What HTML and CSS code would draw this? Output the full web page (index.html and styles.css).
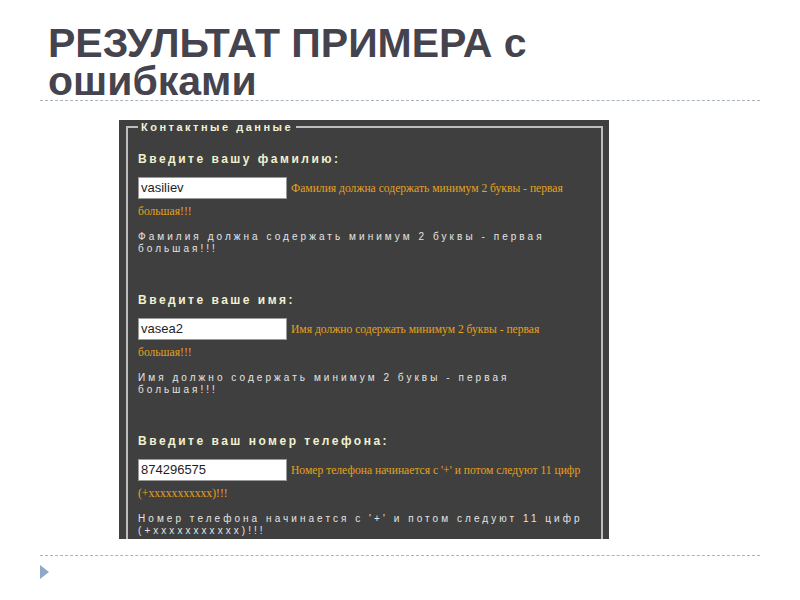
FILE: index.html
```html
<!DOCTYPE html>
<html lang="ru">
<head>
<meta charset="utf-8">
<title>Результат примера с ошибками</title>
<link rel="stylesheet" href="styles.css">
</head>
<body>
<div class="slide">
  <h1 class="title">РЕЗУЛЬТАТ ПРИМЕРА с<br>ошибками</h1>
  <div class="rule"></div>
  <div class="shot-wrap">
    <div class="shot">
      <fieldset class="form">
        <legend class="legend">Контактные данные</legend>
        <div class="section">
          <div class="label">Введите вашу фамилию:</div>
          <div class="row"><span class="input">vasiliev</span><span class="err">Фамилия должна содержать минимум 2 буквы - первая<br>большая!!!</span></div>
          <div class="note">Фамилия должна содержать минимум 2 буквы - первая<br>большая!!!</div>
        </div>
        <div class="section">
          <div class="label">Введите ваше имя:</div>
          <div class="row"><span class="input">vasea2</span><span class="err">Имя должно содержать минимум 2 буквы - первая<br>большая!!!</span></div>
          <div class="note">Имя должно содержать минимум 2 буквы - первая<br>большая!!!</div>
        </div>
        <div class="section">
          <div class="label">Введите ваш номер телефона:</div>
          <div class="row"><span class="input">874296575</span><span class="err">Номер телефона начинается с '+' и потом следуют 11 цифр<br>(+xxxxxxxxxxx)!!!</span></div>
          <div class="note">Номер телефона начинается с '+' и потом следуют 11 цифр<br>(+xxxxxxxxxxx)!!!</div>
        </div>
      </fieldset>
    </div>
  </div>
  <div class="rule rule-bottom"></div>
  <div class="bullet-row"><span class="bullet"></span></div>
</div>
</body>
</html>
```
FILE: styles.css
```css
html, body {
  margin: 0;
  padding: 0;
  background: #ffffff;
}
.slide {
  width: 800px;
  height: 600px;
  overflow: hidden;
  position: relative;
}
.title {
  margin: 0;
  padding: 24px 0 0 48px;
  font-family: "Liberation Sans", Arial, sans-serif;
  font-weight: bold;
  font-size: 41px;
  line-height: 38px;
  color: #44434e;
  height: 76px;
}
.rule {
  margin: 0 40px;
  border-top: 1px dashed #a9b4bf;
  height: 0;
}
.shot-wrap {
  padding: 19px 0 0 119px;
  height: 419px;
}
.shot {
  width: 490px;
  height: 419px;
  background: #3f3f3f;
  overflow: hidden;
  padding-top: 1px;
  box-sizing: border-box;
}
.form {
  margin: 0 6px 0 7px;
  padding: 19px 10px 0 10px;
  border: 2px solid #bdbdbd;
  border-bottom: none;
  min-height: 500px;
  min-width: 0;
}
.legend {
  padding: 0 3px;
  font-family: "Liberation Sans", Arial, sans-serif;
  font-weight: bold;
  font-size: 11px;
  line-height: 12px;
  letter-spacing: 2.5px;
  color: #f1f1d6;
}
.section {
  padding-bottom: 38px;
}
.label {
  font-family: "Liberation Sans", Arial, sans-serif;
  font-weight: bold;
  font-size: 12px;
  line-height: 14px;
  letter-spacing: 2.5px;
  color: #f1f1d0;
  margin-bottom: 11px;
}
.row {
  font-family: "Liberation Serif", "Times New Roman", serif;
  font-size: 11.6px;
  line-height: 23px;
  height: 45px;
  white-space: nowrap;
}
.input {
  display: inline-block;
  vertical-align: top;
  box-sizing: border-box;
  width: 149px;
  height: 22px;
  margin-right: 4px;
  padding-left: 2px;
  background: #ffffff;
  border: 1px solid #9a9a9a;
  font-family: "Liberation Sans", Arial, sans-serif;
  font-size: 13px;
  line-height: 20px;
  color: #1e1e1e;
}
.err {
  color: #e5a21c;
}
.note {
  margin-top: 9px;
  font-family: "Liberation Sans", Arial, sans-serif;
  font-size: 10px;
  line-height: 12px;
  letter-spacing: 3.05px;
  color: #e4e4e4;
  white-space: nowrap;
}
.rule-bottom {
  margin-top: 16px;
}
.bullet-row {
  padding: 9px 0 0 40px;
}
.bullet {
  display: block;
  width: 0;
  height: 0;
  border-top: 7px solid transparent;
  border-bottom: 7px solid transparent;
  border-left: 9px solid #8ea8c7;
}
```
